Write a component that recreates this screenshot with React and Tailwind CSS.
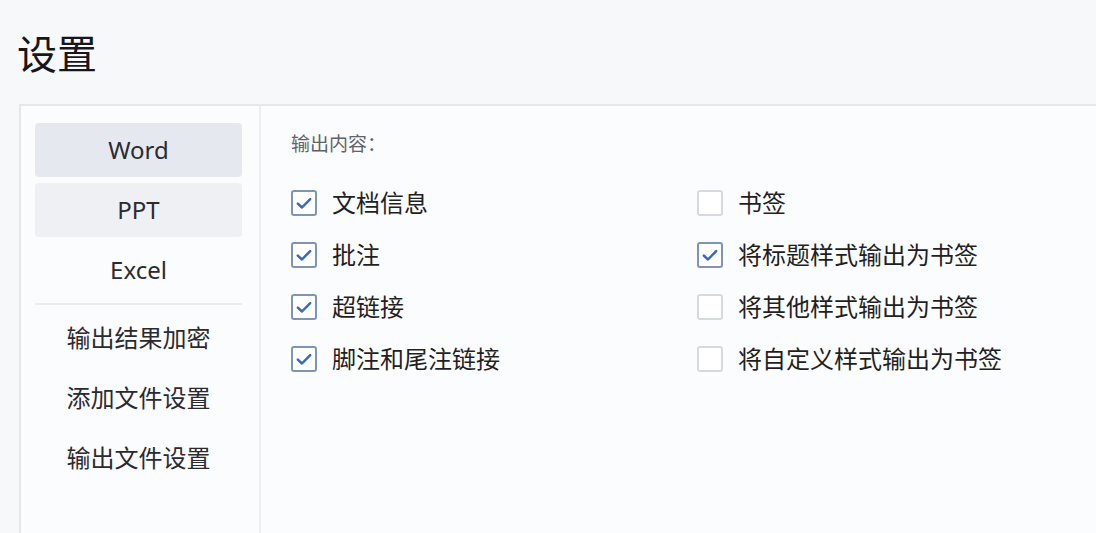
import React from "react";

const font = { fontFamily: '"Noto Sans", "Noto Sans CJK SC", sans-serif' };

const leftItems = [
  { label: "文档信息", checked: true },
  { label: "批注", checked: true },
  { label: "超链接", checked: true },
  { label: "脚注和尾注链接", checked: true },
];

const rightItems = [
  { label: "书签", checked: false },
  { label: "将标题样式输出为书签", checked: true },
  { label: "将其他样式输出为书签", checked: false },
  { label: "将自定义样式输出为书签", checked: false },
];

const Check = ({ checked }) => (
  <div
    className={
      "w-[26px] h-[26px] rounded-[3px] border-2 flex items-center justify-center shrink-0 bg-white " +
      (checked ? "border-[#7f95b8]" : "border-[#d6d9de]")
    }
  >
    {checked && (
      <svg width="18" height="18" viewBox="0 0 16 16" fill="none">
        <polyline points="2.5,8.5 6.2,12 13.5,4.5" stroke="#3a68bd" strokeWidth="2.2" strokeLinecap="round" strokeLinejoin="round" />
      </svg>
    )}
  </div>
);

const Row = ({ label, checked }) => (
  <div className="h-[52px] flex items-center gap-[15px]">
    <Check checked={checked} />
    <span className="text-[24px] leading-none text-[#1f1f24]">{label}</span>
  </div>
);

const NavItem = ({ children, bg }) => (
  <div className={"h-[54px] rounded-[4px] flex items-center justify-center text-[24px] leading-none text-[#2a2a30] " + (bg || "")}>
    {children}
  </div>
);

export default function App() {
  return (
    <div className="w-[1096px] h-[533px] overflow-hidden bg-[#f7f8fa]" style={font}>
      <div className="pl-[17px] pt-[34px] text-[40px] leading-[40px] text-[#16161c]">设置</div>
      <div className="ml-[19px] mt-[30px] h-[500px] border-l-2 border-t-2 border-[#e4e7eb] bg-[#fbfcfd] flex">
        <div className="w-[240px] border-r-2 border-[#eceef1] pl-[14px] pr-[17px] pt-[17px] flex flex-col gap-[6px]">
          <NavItem bg="bg-[#e5e9ef]">Word</NavItem>
          <NavItem bg="bg-[#eef0f4]">PPT</NavItem>
          <NavItem>Excel</NavItem>
          <div className="h-[2px] bg-[#eaecef]" />
          <NavItem>输出结果加密</NavItem>
          <NavItem>添加文件设置</NavItem>
          <NavItem>输出文件设置</NavItem>
        </div>
        <div className="flex-1 pl-[30px] pt-[26px]">
          <div className="text-[19px] leading-[24px] text-[#60636a]">输出内容：</div>
          <div className="mt-[21px] grid grid-cols-[406px_1fr]">
            <div className="flex flex-col">
              {leftItems.map((it) => (
                <Row key={it.label} {...it} />
              ))}
            </div>
            <div className="flex flex-col">
              {rightItems.map((it) => (
                <Row key={it.label} {...it} />
              ))}
            </div>
          </div>
        </div>
      </div>
    </div>
  );
}
